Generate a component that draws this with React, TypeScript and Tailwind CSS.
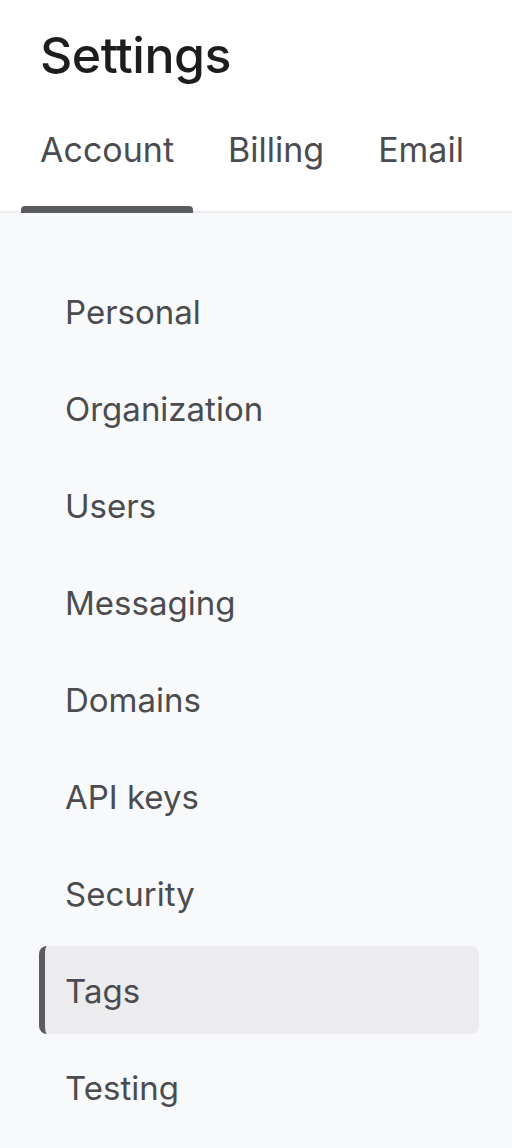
const TABS = ["Account", "Billing", "Email"];

const NAV_ITEMS = [
  "Personal",
  "Organization",
  "Users",
  "Messaging",
  "Domains",
  "API keys",
  "Security",
  "Tags",
  "Testing",
];

export default function App() {
  const activeTab = "Account";
  const activeItem = "Tags";

  return (
    <div
      className="min-h-[1148px] w-[512px] bg-[#f8f9fb]"
      style={{ fontFamily: "Inter, 'Noto Sans', sans-serif" }}
    >
      {/* Header */}
      <header className="border-b-2 border-[#eaecef] bg-white">
        <h1 className="pl-10 pt-[22px] text-[50px] font-medium leading-[66px] tracking-[-0.01em] text-[#1d1d1f]">
          Settings
        </h1>
        <nav className="mt-[33px] flex gap-[16px] pl-[21px]">
          {TABS.map((tab) => {
            const active = tab === activeTab;
            return (
              <button
                key={tab}
                className="relative px-[19px] pb-[38px] pt-[6px] text-[34px] leading-[46px] text-[#4b4c4f]"
              >
                {tab}
                {active && (
                  <span className="absolute -bottom-[2px] left-0 right-0 h-[7px] rounded-t-[4px] bg-[#5b5c5f]" />
                )}
              </button>
            );
          })}
        </nav>
      </header>

      {/* Side menu */}
      <ul className="flex flex-col gap-[9px] pl-[39px] pr-[33px] pt-[54px]">
        {NAV_ITEMS.map((item) => {
          const active = item === activeItem;
          return (
            <li
              key={item}
              className={
                active
                  ? "flex h-[88px] items-center rounded-lg border-l-[6px] border-[#5b5c5f] bg-[#ececee] pl-[20px] pt-[3px] text-[33px] text-[#4b4c4f]"
                  : "flex h-[88px] items-center pl-[26px] pt-[3px] text-[33px] text-[#4b4c4f]"
              }
            >
              {item}
            </li>
          );
        })}
      </ul>
    </div>
  );
}
